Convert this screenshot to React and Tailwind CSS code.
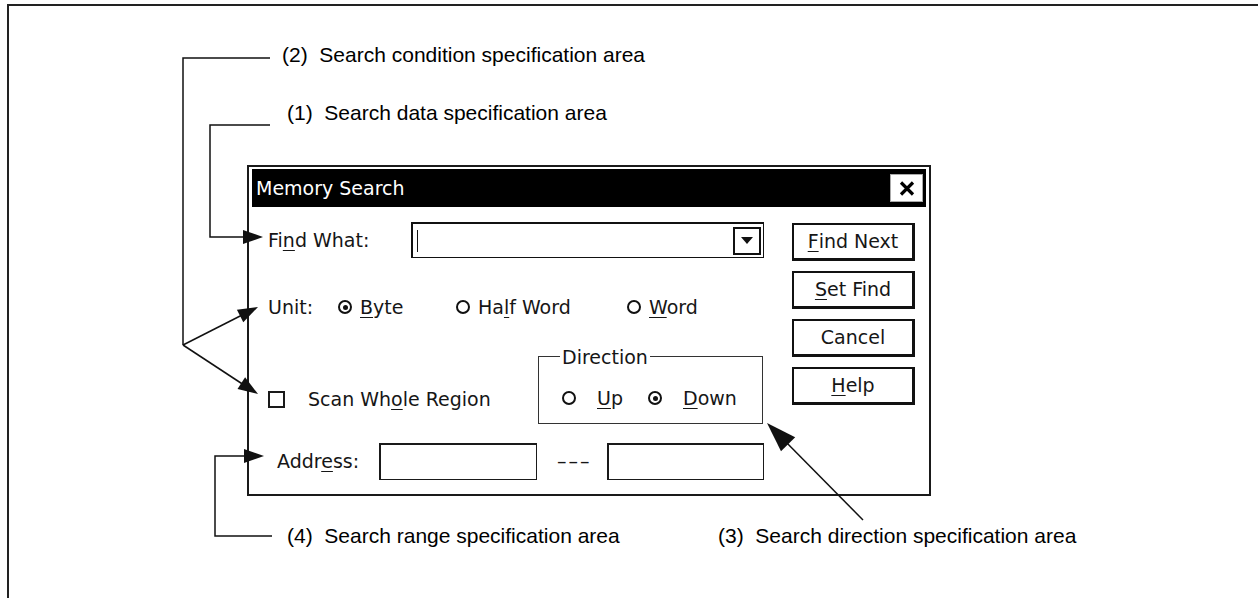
import React from 'react'

function U({ children }) {
  return <span className="underline decoration-1 underline-offset-[3px]">{children}</span>
}

function Radio({ on }) {
  return (
    <span className="w-[14px] h-[14px] rounded-full border-2 border-[#111] bg-white flex items-center justify-center shrink-0">
      {on && <span className="w-[5px] h-[5px] rounded-full bg-[#111]" />}
    </span>
  )
}

function Btn({ children }) {
  return (
    <div className="h-[38px] w-full border-2 border-r-[3px] border-b-[3px] border-[#111] bg-white flex items-center justify-center">
      {children}
    </div>
  )
}

function Field({ w }) {
  return <div className={`${w} h-[37px] border-2 border-r border-b border-[#1a1a1a] bg-white`} />
}

function Callouts() {
  return (
    <svg className="absolute inset-0 pointer-events-none" width="1258" height="598" viewBox="0 0 1258 598">
      <g fill="none" stroke="#111" strokeWidth="1.5">
        <polyline points="270,58 183,58 183,345" />
        <line x1="183" y1="345" x2="250" y2="311" />
        <line x1="183" y1="345" x2="250" y2="389" />
        <polyline points="270,125 210,125 210,237 250,237" />
        <polyline points="272,536 215,536 215,456 250,456" />
        <line x1="863" y1="520" x2="780" y2="436" />
      </g>
      <g fill="#111">
        <polygon points="263,237 243,230 243,244" />
        <polygon points="258,307 243.3,322.3 236.9,309.7" />
        <polygon points="258,394 237.5,389 245.1,377.2" />
        <polygon points="264,456 244,449 244,463" />
        <polygon points="767,423 795.2,437.3 781,451.3" />
      </g>
    </svg>
  )
}

export default function App() {
  return (
    <div className="relative w-[1258px] h-[598px] overflow-hidden bg-white text-black font-['Liberation_Sans',Arial,sans-serif]">
      <div className="ml-[7px] mt-[4px] h-[594px] border-l-2 border-t-2 border-[#222] flex flex-col">
        <div className="mt-[37px] pl-[273px] h-[24px] leading-[24px] text-[21px] whitespace-pre">(2)  Search condition specification area</div>
        <div className="mt-[34px] pl-[278px] h-[24px] leading-[24px] text-[21px] whitespace-pre">(1)  Search data specification area</div>

        {/* dialog */}
        <div className="mt-[40px] ml-[238px] w-[684px] h-[331px] border-2 border-[#1a1a1a] bg-white pt-[2px] px-[3px] flex flex-col text-[19px] text-[#161616] font-['DejaVu_Sans',sans-serif]">
          <div className="h-[38px] bg-black flex items-center justify-between pl-[4px] pr-[3px]">
            <span className="text-white leading-none">Memory Search</span>
            <div className="w-[33px] h-[28px] bg-white border border-[#aaa] flex items-center justify-center">
              <svg width="16" height="15" viewBox="0 0 16 15">
                <path d="M2 1.5 L14 13.5 M14 1.5 L2 13.5" stroke="#000" strokeWidth="3.2" />
              </svg>
            </div>
          </div>

          <div className="flex flex-1">
            <div className="w-[537px] pl-[16px] flex flex-col">
              <div className="mt-[15px] h-[36px] flex items-center">
                <span className="w-[143px]">Fi<U>n</U>d What:</span>
                <div className="w-[353px] h-[36px] border-2 border-r border-b border-[#111] flex items-center justify-between pl-[4px] pr-[2px]">
                  <span className="w-px h-[22px] bg-[#111]" />
                  <div className="w-[28px] h-[28px] border-2 border-[#111] flex items-center justify-center">
                    <svg width="12" height="8" viewBox="0 0 12 8"><polygon points="0,0 12,0 6,7" fill="#111" /></svg>
                  </div>
                </div>
              </div>

              <div className="mt-[31px] h-[36px] flex items-center">
                <span className="w-[70px]">Unit:</span>
                <div className="w-[118px] flex items-center gap-[8px]"><Radio on /><span><U>B</U>yte</span></div>
                <div className="w-[171px] flex items-center gap-[8px]"><Radio /><span>Ha<U>l</U>f Word</span></div>
                <div className="flex items-center gap-[8px]"><Radio /><span><U>W</U>ord</span></div>
              </div>

              <div className="mt-[31px] h-[68px] flex">
                <div className="w-[270px] pt-[18px] flex items-center">
                  <span className="w-[17px] h-[17px] border-2 border-[#1a1a1a] bg-white shrink-0" />
                  <span className="ml-[23px]">Scan Wh<U>o</U>le Region</span>
                </div>
                <div className="relative w-[225px] h-[68px] border border-[#333] pt-[16px] pl-[23px] flex items-center">
                  <span className="absolute left-[21px] -top-[12px] leading-[24px] px-[2px] bg-white">Direction</span>
                  <div className="w-[86px] flex items-center gap-[21px]"><Radio /><span><U>U</U>p</span></div>
                  <div className="flex items-center gap-[21px]"><Radio on /><span><U>D</U>own</span></div>
                </div>
              </div>

              <div className="mt-[19px] h-[37px] flex items-center">
                <span className="ml-[9px] w-[102px]">Addr<U>e</U>ss:</span>
                <Field w="w-[158px]" />
                <span className="ml-[20px] w-[50px] tracking-[2px]">–––</span>
                <Field w="w-[157px]" />
              </div>
            </div>

            <div className="ml-[3px] mt-[16px] w-[123px] flex flex-col gap-[10px]">
              <Btn><U>F</U>ind Next</Btn>
              <Btn><U>S</U>et Find</Btn>
              <Btn>Cancel</Btn>
              <Btn><U>H</U>elp</Btn>
            </div>
          </div>
        </div>

        <div className="mt-[28px] flex h-[24px] leading-[24px] text-[21px] whitespace-pre">
          <span className="ml-[278px] w-[431px]">(4)  Search range specification area</span>
          <span>(3)  Search direction specification area</span>
        </div>
      </div>
      <Callouts />
    </div>
  )
}
